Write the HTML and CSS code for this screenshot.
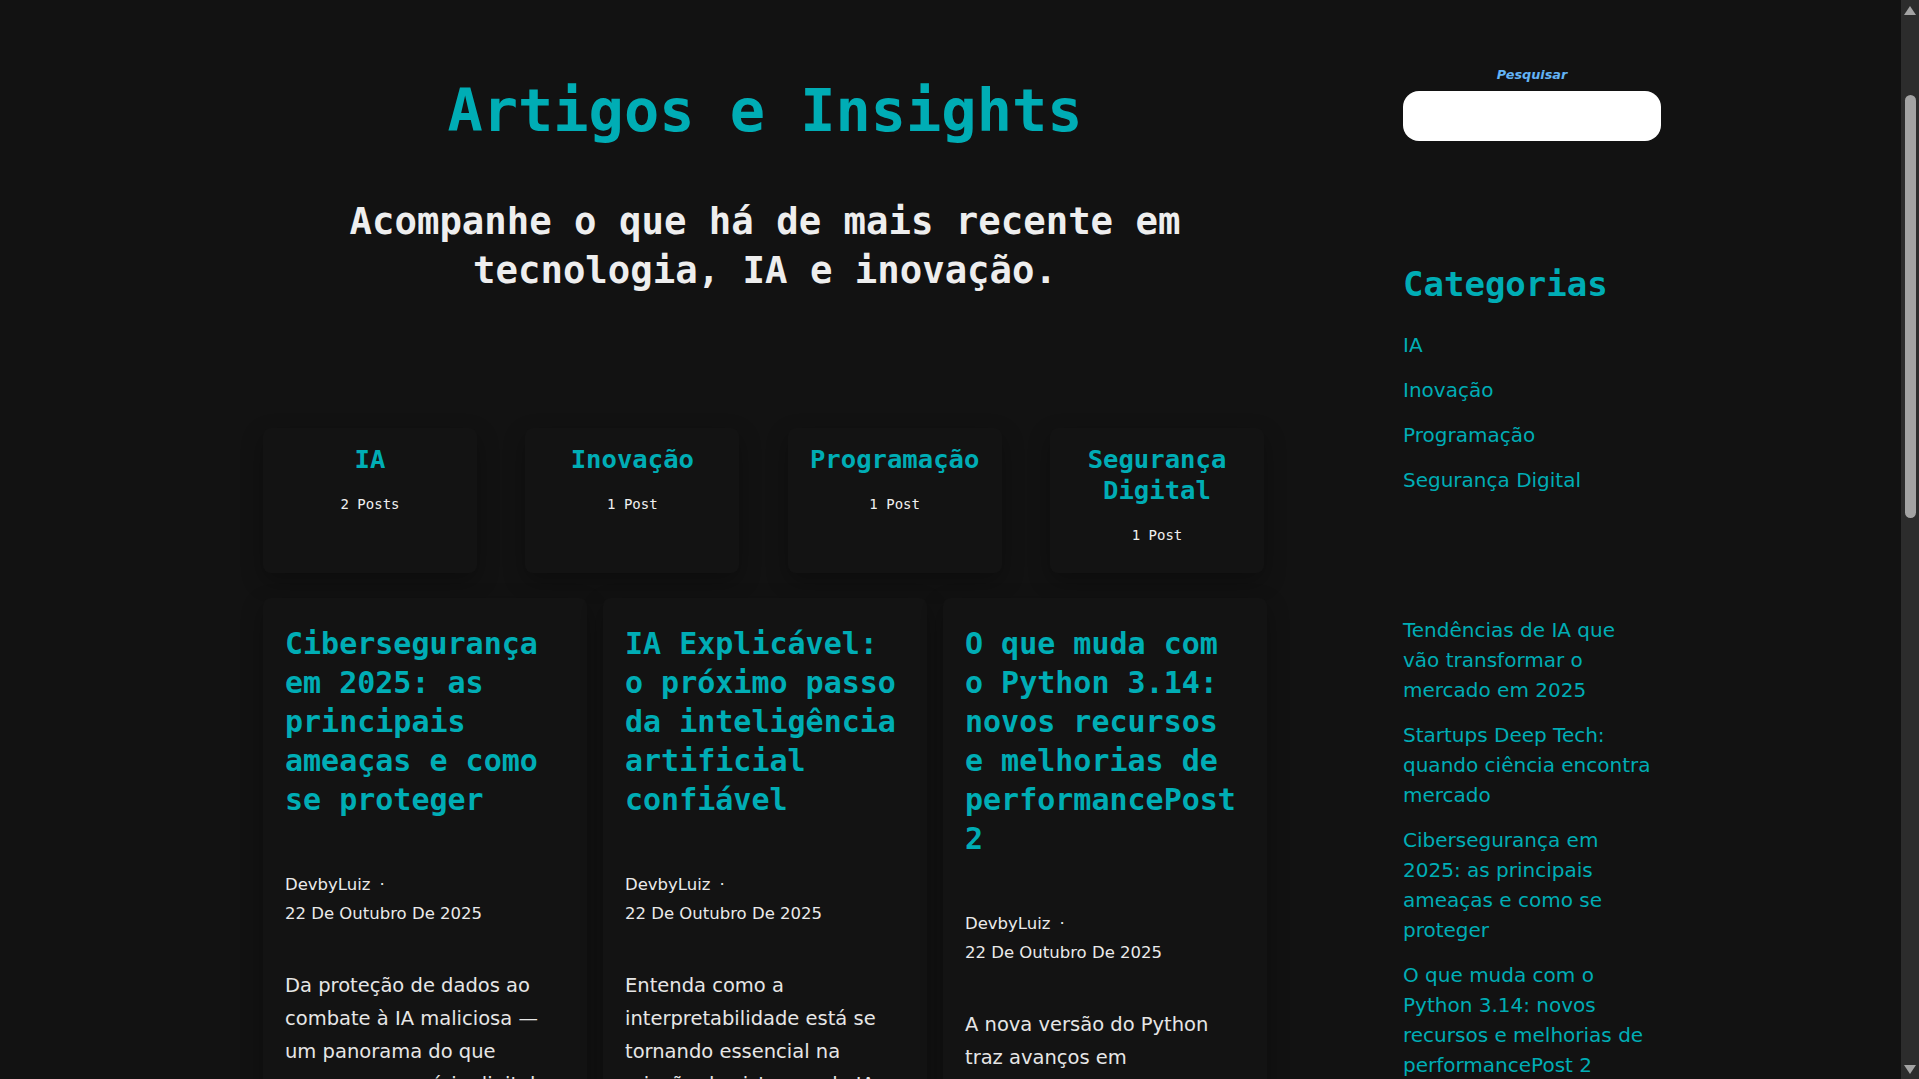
FILE: index.html
```html
<!DOCTYPE html>
<html lang="pt-BR">
<head>
<meta charset="utf-8">
<title>Artigos e Insights</title>
<link rel="stylesheet" href="styles.css">
</head>
<body>
<div class="layout">
  <main class="main">
    <header class="hero">
      <h1 class="hero-title">Artigos e Insights</h1>
      <p class="hero-lead">Acompanhe o que há de mais recente em tecnologia, IA e inovação.</p>
    </header>

    <section class="cats">
      <a class="cat-card" href="#"><h3 class="cat-name">IA</h3><p class="cat-count">2 Posts</p></a>
      <a class="cat-card" href="#"><h3 class="cat-name">Inovação</h3><p class="cat-count">1 Post</p></a>
      <a class="cat-card" href="#"><h3 class="cat-name">Programação</h3><p class="cat-count">1 Post</p></a>
      <a class="cat-card" href="#"><h3 class="cat-name">Segurança Digital</h3><p class="cat-count">1 Post</p></a>
    </section>

    <section class="posts">
      <article class="post">
        <h2 class="post-title">Cibersegurança em 2025: as principais ameaças e como se proteger</h2>
        <div class="post-meta"><span class="author">DevbyLuiz</span><span class="dot">·</span> <span class="date">22 De Outubro De 2025</span></div>
        <p class="excerpt">Da proteção de dados ao combate à IA maliciosa — um panorama do que esperar no cenário digital deste ano.</p>
        <a class="more" href="#">Ler mais →</a>
      </article>
      <article class="post">
        <h2 class="post-title">IA Explicável: o próximo passo da inteligência artificial confiável</h2>
        <div class="post-meta"><span class="author">DevbyLuiz</span><span class="dot">·</span> <span class="date">22 De Outubro De 2025</span></div>
        <p class="excerpt">Entenda como a interpretabilidade está se tornando essencial na criação de sistemas de IA mais transparentes.</p>
        <a class="more" href="#">Ler mais →</a>
      </article>
      <article class="post">
        <h2 class="post-title">O que muda com o Python 3.14: novos recursos e melhorias de performancePost 2</h2>
        <div class="post-meta"><span class="author">DevbyLuiz</span><span class="dot">·</span> <span class="date">22 De Outubro De 2025</span></div>
        <p class="excerpt">A nova versão do Python traz avanços em desempenho, tipagem e novas ferramentas para desenvolvedores.</p>
        <a class="more" href="#">Ler mais →</a>
      </article>
      <article class="post">
        <h2 class="post-title">Startups Deep Tech: quando ciência encontra mercado</h2>
        <div class="post-meta"><span class="author">DevbyLuiz</span><span class="dot">·</span> <span class="date">22 De Outubro De 2025</span></div>
        <p class="excerpt">Como empresas baseadas em pesquisa científica estão mudando a forma de inovar e investir.</p>
        <a class="more" href="#">Ler mais →</a>
      </article>
      <article class="post">
        <h2 class="post-title">Tendências de IA que vão transformar o mercado em 2025</h2>
        <div class="post-meta"><span class="author">DevbyLuiz</span><span class="dot">·</span> <span class="date">22 De Outubro De 2025</span></div>
        <p class="excerpt">Dos agentes autônomos aos modelos multimodais: o que vai moldar os negócios nos próximos meses.</p>
        <a class="more" href="#">Ler mais →</a>
      </article>
    </section>
  </main>

  <aside class="sidebar">
    <form class="search">
      <label class="search-label" for="s">Pesquisar</label>
      <input class="search-input" id="s" type="text">
    </form>

    <section class="widget">
      <h2 class="widget-title">Categorias</h2>
      <ul class="cat-list">
        <li><a href="#">IA</a></li>
        <li><a href="#">Inovação</a></li>
        <li><a href="#">Programação</a></li>
        <li><a href="#">Segurança Digital</a></li>
      </ul>
    </section>

    <ul class="recent">
      <li><a href="#">Tendências de IA que vão transformar o mercado em 2025</a></li>
      <li><a href="#">Startups Deep Tech: quando ciência encontra mercado</a></li>
      <li><a href="#">Cibersegurança em 2025: as principais ameaças e como se proteger</a></li>
      <li><a href="#">O que muda com o Python 3.14: novos recursos e melhorias de performancePost 2</a></li>
      <li><a href="#">IA Explicável: o próximo passo da inteligência artificial confiável</a></li>
    </ul>
  </aside>
</div>

<footer class="footer">
  <p>© 2025 DevbyLuiz. Todos os direitos reservados.</p>
</footer>

<div class="scrollbar" aria-hidden="true">
  <span class="sb-arrow sb-up"></span>
  <span class="sb-thumb"></span>
  <span class="sb-arrow sb-down"></span>
</div>
</body>
</html>
```

FILE: styles.css
```css
:root {
  color-scheme: dark;
}

* {
  box-sizing: border-box;
}

body {
  margin: 0;
  background: #121212;
  color: #e6e6e6;
  font-family: "DejaVu Sans", "Noto Sans", sans-serif;
}

a {
  text-decoration: none;
  color: inherit;
}

.layout {
  display: grid;
  grid-template-columns: 1004px 258px;
  column-gap: 136px;
  margin-left: 263px;
}

/* ---------- main ---------- */
.main {
  padding-top: 76px;
  padding-bottom: 120px;
}

.hero {
  text-align: center;
}

.hero-title {
  margin: 0;
  font-family: "DejaVu Sans Mono", monospace;
  font-size: 58.6px;
  line-height: 70px;
  font-weight: 700;
  color: #00adb5;
}

.hero-lead {
  margin: 51px 0 0;
  font-family: "DejaVu Sans Mono", monospace;
  font-size: 37.3px;
  line-height: 49px;
  font-weight: 700;
  color: #eeeeee;
}

.cats {
  display: grid;
  grid-template-columns: repeat(4, 214px);
  justify-content: space-between;
  margin-top: 133px;
  padding-right: 3px;
}

.cat-card {
  display: block;
  background: #131313;
  border-radius: 8px;
  box-shadow: 0 8px 22px rgba(0, 0, 0, 0.3);
  padding: 16px 18px 28px;
  text-align: center;
}

.cat-name {
  margin: 0;
  font-family: "DejaVu Sans Mono", monospace;
  font-size: 25.6px;
  line-height: 31px;
  font-weight: 700;
  color: #00adb5;
}

.cat-count {
  margin: 19px 0 0;
  font-family: "DejaVu Sans Mono", monospace;
  font-size: 14px;
  line-height: 20px;
  color: #f0f0f0;
}

.posts {
  display: grid;
  grid-template-columns: repeat(3, 1fr);
  gap: 24px 16px;
  margin-top: 25px;
  align-items: start;
}

.post {
  background: #131313;
  border-radius: 8px;
  box-shadow: 0 8px 22px rgba(0, 0, 0, 0.3);
  padding: 26px 22px 28px;
}

.post-title {
  margin: 0;
  font-family: "DejaVu Sans Mono", monospace;
  font-size: 30px;
  line-height: 39px;
  font-weight: 700;
  color: #00adb5;
}

.post-meta {
  margin-top: 51px;
  font-size: 16.5px;
  line-height: 29px;
  color: #eaeaea;
}

.dot {
  margin: 0 0 0 9px;
}

.date {
  white-space: nowrap;
}

.excerpt {
  margin: 41px 0 0;
  font-size: 19.5px;
  line-height: 33px;
  color: #e6e6e6;
}

.more {
  display: inline-block;
  margin-top: 24px;
  font-size: 17px;
  line-height: 28px;
  color: #00adb5;
}

/* ---------- sidebar ---------- */
.sidebar {
  padding-top: 65px;
}

.search {
  display: flex;
  flex-direction: column;
}

.search-label {
  text-align: center;
  font-size: 12.8px;
  line-height: 20px;
  font-weight: 700;
  font-style: italic;
  color: #62b3f6;
}

.search-input {
  margin-top: 6px;
  height: 50px;
  width: 100%;
  border: none;
  border-radius: 16px;
  background: #ffffff;
  padding: 0 16px;
  font-size: 16px;
  color: #111;
}

.widget {
  margin-top: 123px;
}

.widget-title {
  margin: 0;
  font-family: "DejaVu Sans Mono", monospace;
  font-size: 34px;
  line-height: 41px;
  font-weight: 700;
  color: #00adb5;
}

.cat-list {
  list-style: none;
  margin: 25px 0 0;
  padding: 0;
  display: flex;
  flex-direction: column;
  gap: 15px;
}

.cat-list li,
.recent li {
  font-size: 20px;
  line-height: 30px;
  color: #00adb5;
}

.recent {
  list-style: none;
  margin: 120px 0 0;
  padding: 0 8px 0 0;
  display: flex;
  flex-direction: column;
  gap: 15px;
}

/* ---------- footer ---------- */
.footer {
  margin-left: 263px;
  width: 1398px;
  padding: 40px 0 360px;
  border-top: 1px solid #222;
  text-align: center;
  font-size: 15px;
  color: #9a9a9a;
}

/* ---------- window scrollbar (drawn) ---------- */
.scrollbar {
  position: fixed;
  top: 0;
  right: 0;
  width: 18px;
  height: 100vh;
  background: #2c2c2c;
}

.sb-thumb {
  position: absolute;
  left: 4px;
  top: 95px;
  width: 11px;
  height: 423px;
  border-radius: 6px;
  background: #a3a3a3;
}

.sb-arrow {
  position: absolute;
  left: 3px;
  width: 0;
  height: 0;
  border-left: 6.5px solid transparent;
  border-right: 6.5px solid transparent;
}

.sb-up {
  top: 6px;
  border-bottom: 9px solid #a3a3a3;
}

.sb-down {
  bottom: 5px;
  border-top: 9px solid #a3a3a3;
}
```
